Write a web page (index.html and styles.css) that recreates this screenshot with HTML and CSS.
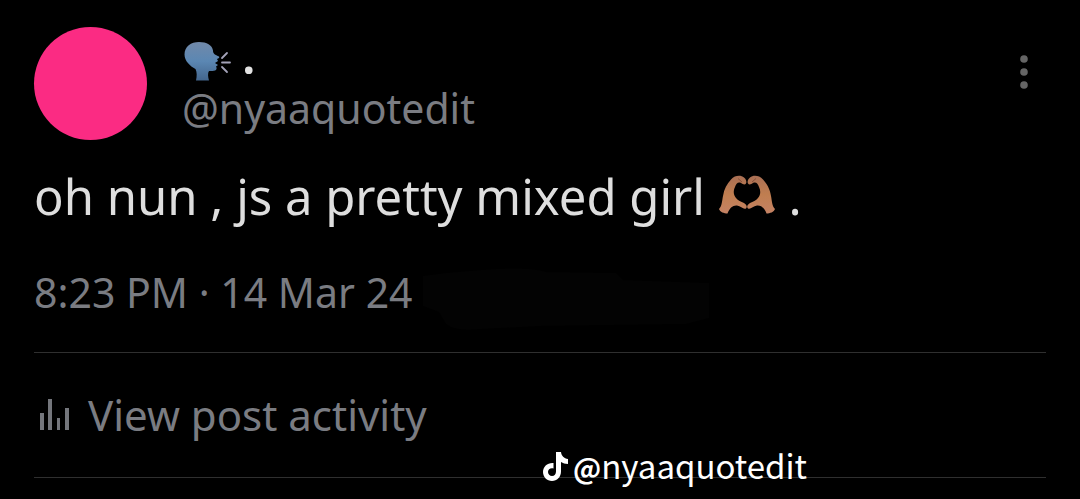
FILE: index.html
```html
<!DOCTYPE html>
<html lang="en">
<head>
    <meta charset="UTF-8">
    <meta name="viewport" content="width=device-width, initial-scale=1.0">
    <title>Post by @nyaaquotedit</title>
    <link rel="stylesheet" href="styles.css">
</head>
<body>

<article class="post">
    <header class="post-header">
        <div class="avatar"></div>
        <div class="author">
            <div class="name">
                <svg class="speaking" viewBox="0 0 47 40" role="img" aria-label="speaking head">
                    <defs>
                        <linearGradient id="head" x1="0" y1="0" x2="0" y2="1">
                            <stop offset="0" stop-color="#7189a9"/>
                            <stop offset="0.5" stop-color="#5b87b3"/>
                            <stop offset="1" stop-color="#43658c"/>
                        </linearGradient>
                    </defs>
                    <path fill="url(#head)" d="M12 39.500C13 35 13 31 11.500 28C6 25 0.500 20 0.500 13.500C0.500 5.500 7 1 15 1C23 1 28 4 29 9.500C29 12 30 13.500 35 15.500C36 16.500 34.500 17.500 33 18L34 20L31 22L34 24L32 25.500C34 29 31 30.500 25 30C23.500 32 24 36 25 39.500Z"/>
                    <path stroke="#a3a2b8" stroke-width="1.800" stroke-linecap="round" d="M38 17L43 12M38 21.500H46M38 26L43 31"/>
                </svg>
                <span>.</span>
            </div>
            <a class="handle" href="#">@nyaaquotedit</a>
        </div>
        <button class="menu" aria-label="More options">
            <svg viewBox="0 0 8 36" fill="#656565">
                <circle cx="4" cy="5" r="3.800"/>
                <circle cx="4" cy="18" r="3.800"/>
                <circle cx="4" cy="31" r="3.800"/>
            </svg>
        </button>
    </header>

    <p class="text">oh nun , js a pretty mixed girl
        <svg class="hands" viewBox="0 0 58 40" role="img" aria-label="heart hands">
            <defs>
                <linearGradient id="skin" x1="0" y1="0" x2="0" y2="1">
                    <stop offset="0" stop-color="#a96f54"/>
                    <stop offset="0.5" stop-color="#c07e50"/>
                    <stop offset="1" stop-color="#c48264"/>
                </linearGradient>
                <path id="hand" d="M1 34C4 31 4 26 5 21C6 14 9 9 13 4.500C17 0 23 0 26 2.500C28 4 29 7 28 8.500C27 10 25 9.500 23 8C20 6.500 18 9 17 12C15 16 15.500 20 18 23C20 25.500 23 26.500 26 28C29 30 29.500 32 28 33.500C25.500 35 23 31 19 30.500C15 30 11.500 33 9.500 38.500C6 38.500 2 37 1 34Z"/>
            </defs>
            <use href="#hand" fill="url(#skin)"/>
            <use href="#hand" fill="url(#skin)" transform="translate(58 0) scale(-1 1)"/>
            <path fill="none" stroke="#87503b" stroke-width="1" d="M20 3.500L24 7M38 3.500L34 7"/>
        </svg>
        .</p>

    <div class="date">
        <time datetime="2024-03-14T20:23">8:23 PM · 14 Mar 24</time>
        <svg class="smudge" viewBox="0 0 290 62" fill="#030303" aria-hidden="true">
            <path d="M2 8Q30 4 60 2Q110 -2 125 4L195 5L202 12L288 15V50L265 56L120 58L60 61Q35 64 25 56L18 44L2 38Z"/>
        </svg>
    </div>

    <a class="activity" href="#">
        <svg class="bars" viewBox="0 0 30 34" fill="#74767c" aria-hidden="true">
            <path d="M0 15H4V32H0ZM8 1H12V32H8ZM17 20H20V32H17ZM25 10H29V32H25Z"/>
        </svg>
        View post activity
    </a>
</article>

<div class="watermark">
    <svg class="note" viewBox="0 0 25 29" fill="#fff" aria-hidden="true">
        <path d="M13 0H18C18.500 4 21 6.500 25 7V12C22 12 20 11 18 10V19.500C18 25 14 29 9 29C4 29 0 25 0 20C0 14.500 4.500 10.500 10.500 11V16.500C7.500 15.500 5 17.500 5 20C5 22.300 6.800 24 9 24C11.500 24 13 22 13 19.500Z"/>
    </svg>
    <span><b>@</b>nyaaquotedit</span>
</div>

</body>
</html>
```
FILE: styles.css
```css
body {
    margin: 0;
    background-color: #000;
    font-family: "Noto Sans", sans-serif;
    font-size: 41px;
    line-height: 48px;
    color: #7a7c82;
}
a {
    color: inherit;
    text-decoration: none;
}
.post {
    padding: 27px 34px 0;
}
.post-header {
    display: flex;
    align-items: flex-start;
    height: 113px;
}
.avatar {
    width: 113px;
    height: 113px;
    border-radius: 50%;
    background-color: #fb2b83;
}
.author {
    flex: 1;
    margin-left: 35px;
    padding-top: 14px;
}
.name {
    display: flex;
    align-items: flex-start;
    gap: 11px;
    height: 43px;
    padding-left: 2px;
    color: #e2e2e2;
    font-size: 49px;
    font-weight: 600;
    line-height: 28px;
}
.speaking {
    width: 47px;
    height: 40px;
}
.handle {
    display: block;
}
.menu {
    width: 36px;
    margin-top: 27px;
    margin-right: 4px;
    padding: 0;
    border: none;
    background: none;
    cursor: pointer;
}
.menu svg {
    display: block;
    width: 8px;
    height: 36px;
    margin: 0 auto;
}
.text {
    margin: 24px 0 40px;
    color: #dedede;
    font-size: 49px;
    line-height: 64px;
}
.hands {
    width: 58px;
    height: 40px;
}
.date {
    display: flex;
    align-items: flex-start;
    gap: 8px;
    height: 84px;
    border-bottom: 1px solid #2f2f2f;
}
.smudge {
    width: 290px;
    height: 62px;
}
.activity {
    display: flex;
    align-items: center;
    gap: 18px;
    height: 124px;
    padding-left: 6px;
    border-bottom: 1px solid #2f2f2f;
    font-size: 42px;
}
.bars {
    width: 30px;
    height: 34px;
}
.watermark {
    position: absolute;
    top: 441px;
    left: 543px;
    display: flex;
    align-items: center;
    gap: 5px;
    color: #fff;
    font-family: "Noto Sans CJK SC", sans-serif;
    font-size: 33px;
}
.watermark b {
    font-size: 28px;
}
.note {
    width: 25px;
    height: 29px;
}
```
